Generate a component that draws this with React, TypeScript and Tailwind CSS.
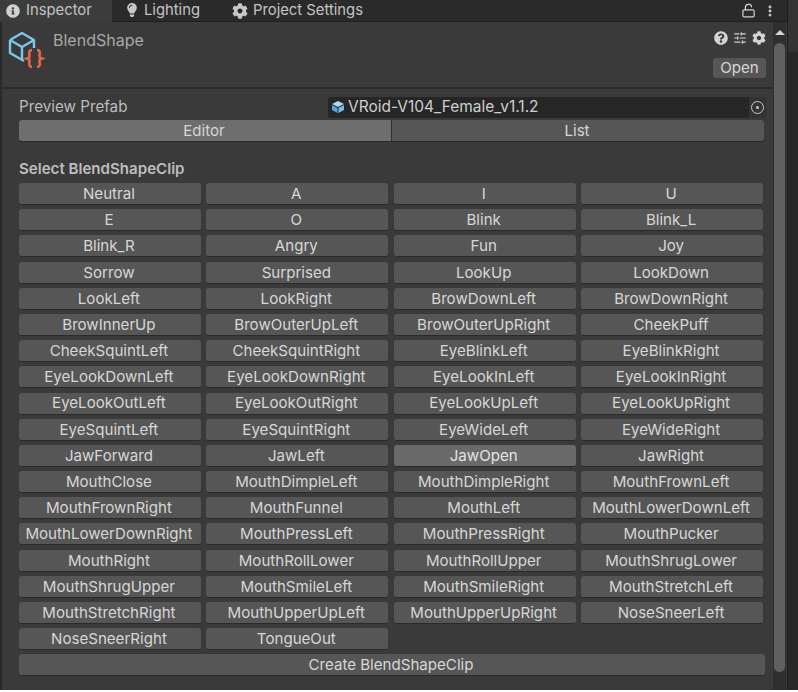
import { LockOpen, EllipsisVertical, SlidersHorizontal } from "lucide-react";
import { FaCog, FaInfoCircle, FaLightbulb, FaQuestionCircle } from "react-icons/fa";

const CLIPS = [
  "Neutral", "A", "I", "U",
  "E", "O", "Blink", "Blink_L",
  "Blink_R", "Angry", "Fun", "Joy",
  "Sorrow", "Surprised", "LookUp", "LookDown",
  "LookLeft", "LookRight", "BrowDownLeft", "BrowDownRight",
  "BrowInnerUp", "BrowOuterUpLeft", "BrowOuterUpRight", "CheekPuff",
  "CheekSquintLeft", "CheekSquintRight", "EyeBlinkLeft", "EyeBlinkRight",
  "EyeLookDownLeft", "EyeLookDownRight", "EyeLookInLeft", "EyeLookInRight",
  "EyeLookOutLeft", "EyeLookOutRight", "EyeLookUpLeft", "EyeLookUpRight",
  "EyeSquintLeft", "EyeSquintRight", "EyeWideLeft", "EyeWideRight",
  "JawForward", "JawLeft", "JawOpen", "JawRight",
  "MouthClose", "MouthDimpleLeft", "MouthDimpleRight", "MouthFrownLeft",
  "MouthFrownRight", "MouthFunnel", "MouthLeft", "MouthLowerDownLeft",
  "MouthLowerDownRight", "MouthPressLeft", "MouthPressRight", "MouthPucker",
  "MouthRight", "MouthRollLower", "MouthRollUpper", "MouthShrugLower",
  "MouthShrugUpper", "MouthSmileLeft", "MouthSmileRight", "MouthStretchLeft",
  "MouthStretchRight", "MouthUpperUpLeft", "MouthUpperUpRight", "NoseSneerLeft",
  "NoseSneerRight", "TongueOut",
];

function AssetIcon() {
  return (
    <svg width="38" height="38" viewBox="0 0 38 38" fill="none" className="shrink-0">
      <path
        d="M2 9 L14 2 L26 9 L26 17 M2 9 L2 22 L16 30 M2 9 L14 16 L26 9 M14 16 L14 28"
        stroke="#7cc8ea"
        strokeWidth="2.4"
        strokeLinejoin="round"
      />
      <path
        d="M24 19 C20 19 21.500 23 21.500 25 C21.500 27 20.500 27 19 27.500 C20.500 28 21.500 28 21.500 30 C21.500 32 20 36 24 36"
        stroke="#e8654a"
        strokeWidth="2.6"
      />
      <path
        d="M29 19 C33 19 31.500 23 31.500 25 C31.500 27 32.500 27 34 27.500 C32.500 28 31.500 28 31.500 30 C31.500 32 33 36 29 36"
        stroke="#e8654a"
        strokeWidth="2.6"
      />
    </svg>
  );
}

function ClipButton({ label }: { label: string }) {
  const active = label === "JawOpen";
  return (
    <div
      className={`h-[22px] flex items-center justify-center pr-[2px] rounded-[3px] whitespace-nowrap border-b border-[#2a2a2a] ${
        active ? "bg-[#6a6a6a] text-[#e4e4e4]" : "bg-[#565656] text-[#d6d6d6]"
      }`}
    >
      {label}
    </div>
  );
}

export default function App() {
  return (
    <div className="w-[798px] h-[692px] flex flex-col bg-white overflow-hidden font-['Inter',sans-serif] text-[15.1px] leading-none">
      <div className="h-[690px] flex bg-[#282828]">
        <div className="w-[788px] flex flex-col border-r border-[#1e1e1e]">
          {/* tab strip */}
          <div className="h-[22px] flex items-center bg-[#2a2a2a] border-b border-[#1f1f1f] text-[#c4c4c4] text-[14.8px] shrink-0">
            <div className="w-[112px] h-[22px] flex items-center gap-[6px] pl-[6px] bg-[#3c3c3c]">
              <FaInfoCircle size={14} color="#d0d0d0" />
              <span>Inspector</span>
            </div>
            <div className="flex items-center gap-[5px] pl-[13px] w-[107px]">
              <FaLightbulb size={14} color="#c8c8c8" />
              <span>Lighting</span>
            </div>
            <div className="flex items-center gap-[5px] pl-[13px]">
              <FaCog size={16} color="#c8c8c8" />
              <span>Project Settings</span>
            </div>
            <div className="ml-auto flex items-center gap-[7px] pr-[10px]">
              <LockOpen size={15} stroke="#d0d0d0" />
              <EllipsisVertical size={14} stroke="#d0d0d0" strokeWidth={3} />
            </div>
          </div>

          <div className="flex-1 flex min-h-0 bg-[#3a3a3a] border-l-2 border-[#2a2a2a]">
            <div className="flex-1 min-w-0 flex flex-col">
              {/* asset header */}
              <div className="h-[67px] flex border-b-2 border-[#2b2b2b] shrink-0">
                <div className="pl-[6px] pt-[9px]">
                  <AssetIcon />
                </div>
                <div className="pl-[7px] pt-[10px] text-[#a8a8a8] text-[16px]">BlendShape</div>
                <div className="ml-auto flex flex-col items-end pr-[7px] pt-[9px]">
                  <div className="flex items-center gap-[5px] text-[#d4d4d4]">
                    <FaQuestionCircle size={14} />
                    <SlidersHorizontal size={14} />
                    <FaCog size={14} />
                  </div>
                  <div className="mt-[13px] w-[53px] h-[20px] flex items-center justify-center rounded-[3px] bg-[#565656] text-[#d6d6d6]">
                    Open
                  </div>
                </div>
              </div>

              {/* preview prefab field */}
              <div className="h-[26px] mt-[5px] flex items-center pl-[17px] shrink-0">
                <span className="w-[309px] text-[15.2px] text-[#bcbcbc]">Preview Prefab</span>
                <div className="w-[438px] h-[21px] flex items-center rounded-[3px] bg-[#262626] text-[15.5px] text-[#cfcfcf]">
                  <svg width="14" height="14" viewBox="0 0 14 14" className="ml-[3px] mr-[3px]">
                    <path d="M7 1 L13 4 L7 7 L1 4 Z" fill="#a9dcf5" />
                    <path d="M1 5 L6.500 8 L6.500 13 L1 10 Z" fill="#4fa8d8" />
                    <path d="M13 5 L7.500 8 L7.500 13 L13 10 Z" fill="#74c1e8" />
                  </svg>
                  <span>VRoid-V104_Female_v1.1.2</span>
                  <div className="ml-auto h-full w-[17px] flex items-center justify-center rounded-r-[3px] bg-[#333333]">
                    <div className="w-[13px] h-[13px] rounded-full border border-[#c8c8c8] flex items-center justify-center">
                      <div className="w-[3px] h-[3px] rounded-full bg-[#c8c8c8]" />
                    </div>
                  </div>
                </div>
              </div>

              {/* tabs */}
              <div className="h-[22px] ml-[17px] mr-[9px] flex shrink-0 border-b border-[#2a2a2a] text-[#d6d6d6]">
                <div className="w-[373px] flex items-center justify-center pr-[2px] rounded-l-[3px] bg-[#6e6e6e] border-r border-[#2f2f2f]">
                  Editor
                </div>
                <div className="flex-1 flex items-center justify-center pr-[2px] rounded-r-[3px] bg-[#565656]">
                  List
                </div>
              </div>

              <div className="mt-[19px] ml-[17px] h-[14px] font-semibold text-[#bebebe] shrink-0">
                Select BlendShapeClip
              </div>

              {/* clip buttons */}
              <div className="mt-[8px] ml-[17px] mr-[10px] grid grid-cols-4 gap-x-[5.5px] gap-y-[4.2px] auto-rows-[22px]">
                {CLIPS.map((clip) => (
                  <ClipButton key={clip} label={clip} />
                ))}
              </div>

              <div className="mt-[4px] ml-[17px] mr-[8px] h-[22px] flex items-center justify-center pr-[2px] rounded-[3px] bg-[#565656] border-b border-[#2a2a2a] text-[#d6d6d6]">
                Create BlendShapeClip
              </div>
            </div>

            {/* scrollbar */}
            <div className="w-[13px] shrink-0 mr-[1px] flex flex-col items-center bg-[#2f2f2f]">
              <div className="mt-[8px] w-0 h-0 border-x-[5px] border-x-transparent border-b-[5px] border-b-[#d4d4d4]" />
              <div className="mt-[8px] w-[11px] h-[629px] rounded-full bg-[#606060]" />
            </div>
          </div>
        </div>
        <div className="flex-1 flex flex-col">
          <div className="h-[52px] bg-[#333333]" />
          <div className="flex-1 bg-[#282828]" />
        </div>
      </div>
    </div>
  );
}
